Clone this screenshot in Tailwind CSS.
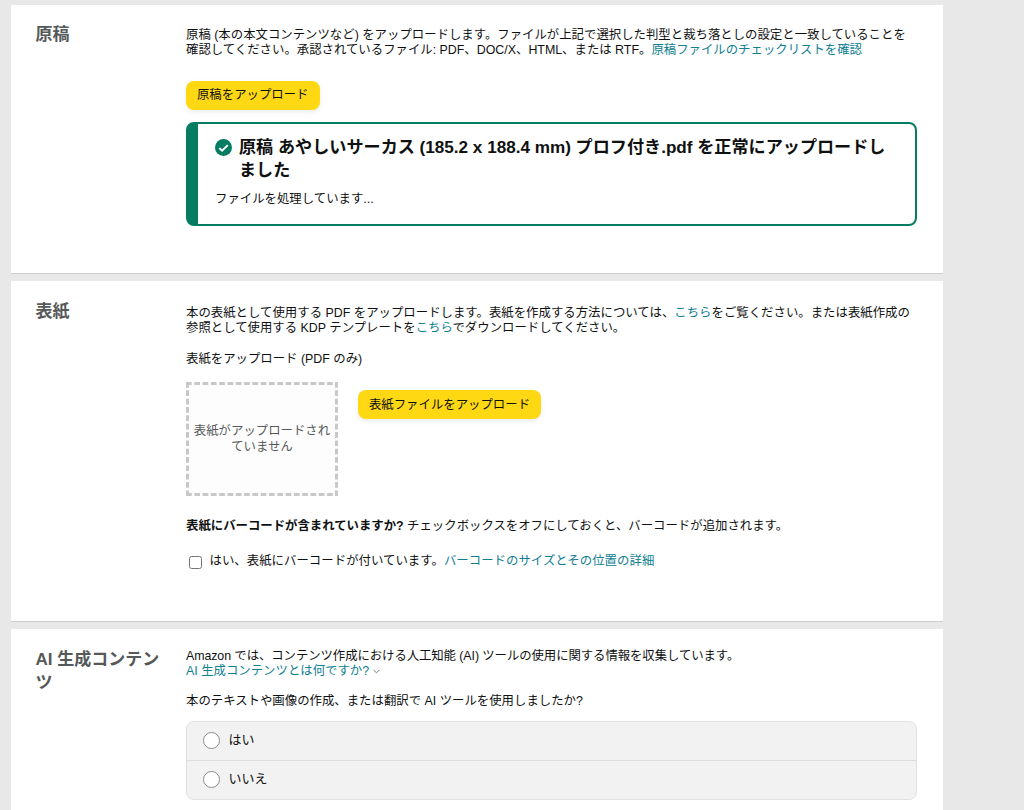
<!DOCTYPE html>
<html lang="ja">
  <head>
    <meta charset="UTF-8" />
    <meta name="viewport" content="width=device-width, initial-scale=1.0" />
    <title>原稿と表紙</title>
    <script src="https://cdn.jsdelivr.net/npm/@tailwindcss/browser@4"></script>
    <style>
      body {
        font-family: "Liberation Sans", "Noto Sans CJK JP", sans-serif;
      }
    </style>
  </head>
  <body class="h-[810px] overflow-hidden bg-[#e8e8e8] pt-[5px] pl-[11px] text-[12.4px] leading-[15.4px] text-[#0f1111]">
    <main class="flex w-[932px] flex-col gap-[7px] whitespace-nowrap">
      <!-- Manuscript -->
      <section class="flex h-[269px] border-b border-[#cdcdcd] bg-white pt-[23px] pl-[24.5px]">
        <h2 class="-mt-1 w-[150.5px] shrink-0 text-[17px] leading-[22.5px] font-bold text-[#565959]">原稿</h2>
        <div class="w-[731px]">
          <p>
            原稿 (本の本文コンテンツなど) をアップロードします。ファイルが上記で選択した判型と裁ち落としの設定と一致していることを<br />
            確認してください。承認されているファイル: PDF、DOC/X、HTML、または RTF。<a class="text-[#0f8091]">原稿ファイルのチェックリストを確認</a>
          </p>
          <button class="mt-[22.2px] block h-[29px] w-[133.5px] rounded-lg bg-[#ffd814] pt-px shadow-[0_2px_4px_rgba(213,217,217,0.5)]">原稿をアップロード</button>

          <div class="mt-3 h-[104px] rounded-lg border-2 border-l-[12px] border-[#067d62] pt-[13px] pl-[17px]">
            <div class="flex gap-[7px]">
              <svg class="mt-[2px] size-[17px] shrink-0" viewBox="0 0 17 17">
                <circle cx="8.5" cy="8.5" r="8.5" fill="#067d62" />
                <path d="M4.3 9.1l2.8 2.6 5.7-5.6" fill="none" stroke="#fff" stroke-width="1.9" />
              </svg>
              <h4 class="text-[17.12px] leading-[22.8px] font-bold">
                原稿 あやしいサーカス (185.2 x 188.4 mm) プロフ付き.pdf を正常にアップロードし<br />ました
              </h4>
            </div>
            <p class="mt-[9.4px]">ファイルを処理しています...</p>
          </div>
        </div>
      </section>

      <!-- Cover -->
      <section class="flex h-[341px] border-b border-[#cdcdcd] bg-white pt-6 pl-[24.5px]">
        <h2 class="-mt-1 w-[150.5px] shrink-0 text-[17px] leading-[22.5px] font-bold text-[#565959]">表紙</h2>
        <div class="w-[731px] pt-[0.7px]">
          <p>
            <span class="tracking-[0.01px]">本の表紙として使用する PDF をアップロードします。表紙を作成する方法については、<a class="text-[#0f8091]">こちら</a>をご覧ください。または表紙作成の</span><br />
            参照として使用する KDP テンプレートを<a class="text-[#0f8091]">こちら</a>でダウンロードしてください。
          </p>
          <p class="mt-[15.1px]">表紙をアップロード (PDF のみ)</p>
          <div class="mt-[15px] flex items-start gap-5">
            <div class="relative flex h-[114px] w-[152px] items-center justify-center bg-[#fdfdfd] text-center text-[#565959]">
              <svg class="absolute inset-0 size-full" viewBox="0 0 152 114" fill="none" stroke="#c8c8c8" stroke-width="3">
                <path d="M0 1.5h152M0 112.5h152" stroke-dasharray="5.7 2.6" />
                <path d="M1.5 0v114M150.5 0v114" stroke-dasharray="5.7 2.64" />
              </svg>
              <p class="pt-px">表紙がアップロードされ<br />ていません</p>
            </div>
            <button class="mt-2 h-[29px] w-[183px] rounded-lg bg-[#ffd814] pt-[2px] shadow-[0_2px_4px_rgba(213,217,217,0.5)]">表紙ファイルをアップロード</button>
          </div>
          <p class="mt-[23px] tracking-[-0.01px]"><b>表紙にバーコードが含まれていますか?</b> チェックボックスをオフにしておくと、バーコードが追加されます。</p>
          <label class="mt-[19.4px] flex pl-[3px]">
            <input type="checkbox" class="mt-[2.6px] mr-[7.5px] size-[13px] shrink-0 appearance-none rounded-[2.5px] border border-[#767676] bg-white" />
            <span class="tracking-[0.03px]">はい、表紙にバーコードが付いています。<a class="text-[#0f8091]">バーコードのサイズとその位置の詳細</a></span>
          </label>
        </div>
      </section>

      <!-- AI-generated content -->
      <section class="flex h-[190px] bg-white pt-5 pl-[24.5px]">
        <h2 class="w-[150.5px] shrink-0 text-[17px] leading-[22.5px] font-bold text-[#565959]">AI 生成コンテン<br />ツ</h2>
        <div class="w-[731px]">
          <p>
            <span class="tracking-[-0.08px]">Amazon では、コンテンツ作成における人工知能 (AI) ツールの使用に関する情報を収集しています。</span><br />
            <a class="text-[#0f8091]">AI 生成コンテンツとは何ですか?</a>
            <svg class="inline-block h-[5px] w-[7px] align-[1px]" viewBox="0 0 7 5"><path d="M.7 1l2.8 2.8L6.3 1" fill="none" stroke="#777" /></svg>
          </p>
          <p class="mt-[14.4px]">本のテキストや画像の作成、または翻訳で AI ツールを使用しましたか?</p>
          <div class="mt-[11px] h-[79px] rounded-lg border-[1.5px] border-[#dfe2e2] bg-[#f2f2f2] text-[13px]">
            <label class="flex h-[39px] items-center gap-[8.5px] border-b border-[#dcdfdf] pl-4">
              <input type="radio" name="ai" class="size-[17px] appearance-none rounded-full border border-[#888c8c] bg-white" />
              <span class="-mt-px">はい</span>
            </label>
            <label class="flex h-[38px] items-center gap-[8.5px] pl-4">
              <input type="radio" name="ai" class="size-[17px] appearance-none rounded-full border border-[#888c8c] bg-white" />
              <span class="-mt-px">いいえ</span>
            </label>
          </div>
        </div>
      </section>
    </main>
  </body>
</html>
